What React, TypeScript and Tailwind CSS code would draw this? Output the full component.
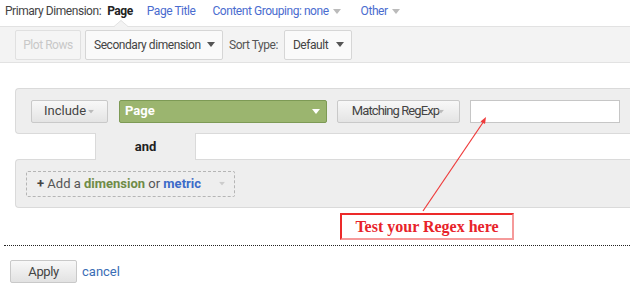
import React from "react";

function Caret({ className = "" }: { className?: string }) {
  return (
    <svg width="8" height="5" viewBox="0 0 8 5" className={className}>
      <path d="M0 0 L8 0 L4 5 Z" fill="currentColor" />
    </svg>
  );
}

export default function App() {
  return (
    <div className="relative w-[630px] h-[284px] overflow-hidden bg-white font-['Roboto',sans-serif] text-[12px] text-[#333]">
      {/* primary dimension row */}
      <div className="flex items-center h-[26px] pb-[4px] pl-[5px] tracking-[-0.45px] whitespace-nowrap">
        <span className="text-[#444]">Primary Dimension:</span>
        <span className="ml-[6px] font-bold text-[#222]">Page</span>
        <span className="ml-[14px] text-[#4a6ccf]">Page Title</span>
        <span className="ml-[17px] text-[#4a6ccf] flex items-center">
          Content Grouping: none
          <Caret className="ml-[4px] text-[#bbb]" />
        </span>
        <span className="ml-[20px] text-[#4a6ccf] flex items-center">
          Other
          <Caret className="ml-[4px] text-[#bbb]" />
        </span>
      </div>

      {/* toolbar */}
      <div className="relative flex items-center h-[37px] bg-[#f3f3f3] border-y border-[#e2e2e2] pl-[15px] tracking-[-0.45px] whitespace-nowrap">
        <svg width="14" height="7" viewBox="0 0 14 7" className="absolute left-[114px] top-[-7px]">
          <path d="M0 7 L7 0 L14 7 Z" fill="#f3f3f3" />
          <path d="M0 6.5 L7 0.5 L14 6.5" fill="none" stroke="#e2e2e2" />
        </svg>
        <div className="flex items-center justify-center w-[66px] h-[30px] rounded-[2px] border border-[#e0e0e0] bg-[#f5f5f5] text-[#c8c8c8]">
          Plot Rows
        </div>
        <div className="ml-[4px] flex items-center justify-between w-[138px] h-[30px] rounded-[2px] border border-[#d6d6d6] bg-[#fafafa] pl-[8px] pr-[7px] text-[#444]">
          Secondary dimension
          <Caret className="text-[#555]" />
        </div>
        <span className="ml-[6px] text-[#555]">Sort Type:</span>
        <div className="ml-[6px] flex items-center justify-between w-[68px] h-[30px] rounded-[2px] border border-[#d6d6d6] bg-[#fafafa] pl-[8px] pr-[7px] text-[#444]">
          Default
          <Caret className="text-[#555]" />
        </div>
      </div>

      {/* filter panel 1 */}
      <div className="mt-[25px] ml-[15px] w-[630px] h-[46px] flex items-center bg-[#eeeeee] border border-r-0 border-[#dadada] rounded-l-[4px] pl-[15px] text-[13px]">
        <div className="flex items-center justify-center w-[77px] h-[23px] rounded-[2px] border border-[#c9c9c9] bg-gradient-to-b from-[#f8f8f8] to-[#e4e4e4] text-[#444]">
          Include
          <Caret className="ml-[1px] text-[#bbb] scale-75" />
        </div>
        <div className="ml-[11px] flex items-center justify-between w-[208px] h-[23px] rounded-[2px] border border-[#7d9a55] bg-[#9bb56f] pl-[5px] pr-[6px] font-bold text-white">
          Page
          <Caret className="text-white" />
        </div>
        <div className="ml-[10px] flex items-center justify-center w-[123px] h-[23px] rounded-[2px] border border-[#c9c9c9] bg-gradient-to-b from-[#f8f8f8] to-[#e4e4e4] text-[#444] tracking-[-0.9px] whitespace-nowrap">
          Matching RegExp
          <Caret className="-ml-[2px] text-[#bbb] scale-75" />
        </div>
        <div className="ml-[10px] w-[150px] h-[23px] border border-[#c6c6c6] bg-white" />
      </div>

      {/* connector */}
      <div className="relative -my-px ml-[95px] w-[101px] h-[27px] flex items-center justify-center bg-[#eeeeee] border-x border-[#dadada] text-[13px] font-bold text-[#222]">
        and
      </div>

      {/* filter panel 2 */}
      <div className="ml-[15px] w-[630px] h-[49px] flex items-center bg-[#eeeeee] border border-r-0 border-[#dadada] rounded-l-[4px] pl-[10px] text-[13px]">
        <div className="flex items-center justify-between w-[209px] h-[26px] rounded-[2px] border border-dashed border-[#b5b5b5] pl-[10px] pr-[8px] text-[#555]">
          <span>
            <span className="font-bold text-[#444]">+</span> Add a{" "}
            <span className="font-bold text-[#6f8b47]">dimension</span> or{" "}
            <span className="font-bold text-[#3c6bc9]">metric</span>
          </span>
          <Caret className="text-[#ccc] scale-75" />
        </div>
      </div>

      {/* annotation */}
      <div className="mt-[5px] ml-[340px] w-[174px] h-[27px] flex items-center justify-center border-2 border-[#ec2a2a] border-r-[#f59a9a] border-b-[#f59a9a] font-['Liberation_Serif',serif] text-[16px] font-bold text-[#e8232a]">
        Test your Regex here
      </div>

      <div className="mt-[5px] ml-[4px] border-t border-dotted border-[#222]" />

      <div className="mt-[14px] ml-[10px] flex items-center text-[13px]">
        <div className="flex items-center justify-center w-[67px] h-[23px] rounded-[2px] border border-[#c9c9c9] bg-gradient-to-b from-[#f8f8f8] to-[#e2e2e2] text-[#444] tracking-[-0.4px]">
          Apply
        </div>
        <span className="ml-[5px] text-[#3a6db5]">cancel</span>
      </div>

      {/* arrow overlay */}
      <svg className="absolute left-0 top-0 pointer-events-none" width="630" height="284">
        <line x1="423" y1="211" x2="484" y2="121" stroke="#ef3b3b" strokeWidth="1.2" />
        <path d="M486 117 L480.5 121.5 L485 124 Z" fill="#ef3b3b" />
      </svg>
    </div>
  );
}
